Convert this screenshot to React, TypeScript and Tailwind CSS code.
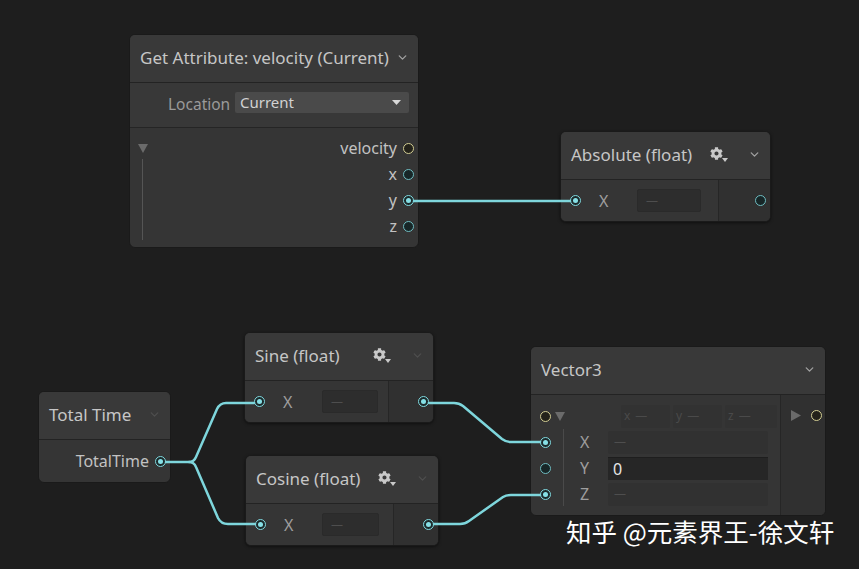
import React from 'react'
import { ChevronDown } from 'lucide-react'
import { FaCog } from 'react-icons/fa'

const font = { fontFamily: '"Noto Sans", "Open Sans", sans-serif' }

// Port circles: cyan float ports (linked / unlinked) and yellow vector ports
const Port = ({ kind }: { kind: 'linked' | 'free' | 'vec' }) => {
  if (kind === 'linked') {
    return (
      <div className="flex h-[11px] w-[11px] shrink-0 items-center justify-center rounded-full border-[1.5px] border-[#80d9df] bg-[#1c2a2b]">
        <div className="h-[5px] w-[5px] rounded-full bg-[#86e0e6]" />
      </div>
    )
  }
  if (kind === 'vec') {
    return <div className="h-[11px] w-[11px] shrink-0 rounded-full border-[1.5px] border-[#d2cd93] bg-[#23221a]" />
  }
  return <div className="h-[11px] w-[11px] shrink-0 rounded-full border-[1.5px] border-[#6fbcc1] bg-[#172627]" />
}

const Fold = () => (
  <svg width="10" height="9" viewBox="0 0 10 9" className="shrink-0">
    <path d="M0 0 H10 L5 9 Z" fill="#6b6b6b" />
  </svg>
)

const Gear = () => (
  <div className="relative h-[16px] w-[18px]">
    <FaCog size={13} color="#c9c9c9" className="absolute left-0 top-0" />
    <svg width="6" height="4" viewBox="0 0 6 4" className="absolute bottom-[1px] right-0">
      <path d="M0 0 H6 L3 4 Z" fill="#c9c9c9" />
    </svg>
  </div>
)

const Header = ({ title, gear, dim }: { title: string; gear?: boolean; dim?: boolean }) => (
  <div className="flex h-[48px] items-center border-b border-[#232323] bg-[#393939] pb-[2px] pl-[10px] pr-[9px]">
    <span className="text-[17px] text-[#c6c6c6]">{title}</span>
    <div className="flex-1" />
    {gear && (
      <div className="mr-[20px] flex items-center">
        <Gear />
      </div>
    )}
    <ChevronDown size={13} strokeWidth={2.5} color={dim ? '#4e4e4e' : '#a0a0a0'} />
  </div>
)

const Field = ({ w }: { w: number }) => (
  <div
    className="flex h-[23px] items-center rounded-[2px] border border-[#2a2a2a] bg-[#2d2d2d] pl-[8px] text-[12px] text-[#4e4e4e]"
    style={{ width: w }}
  >
    —
  </div>
)

// Single-input float operator node (Absolute / Sine / Cosine)
const OpNode = ({ title, x, y, w, split, field, fieldW }: {
  title: string; x: number; y: number; w: number; split: number; field: number; fieldW: number
}) => (
  <div
    className="absolute overflow-hidden rounded-[6px] border border-[#1a1a1a] bg-[#363636] shadow-[0_1px_3px_rgba(0,0,0,0.5)]"
    style={{ left: x, top: y, width: w }}
  >
    <Header title={title} gear dim={title !== 'Absolute (float)'} />
    <div className="flex h-[41px]">
      <div className="flex items-center border-r border-[#262626] bg-[#353535] pl-[9px]" style={{ width: split }}>
        <Port kind="linked" />
        <span className="ml-[18px] text-[16px] text-[#9e9e9e]">X</span>
        <div className="flex-1" />
        <div style={{ marginRight: split - field - fieldW }}>
          <Field w={fieldW} />
        </div>
      </div>
      <div className="flex flex-1 items-center justify-end bg-[#303030] pr-[4px]">
        <Port kind={title === 'Absolute (float)' ? 'free' : 'linked'} />
      </div>
    </div>
  </div>
)

export default function App() {
  return (
    <div className="relative h-[569px] w-[859px] overflow-hidden bg-[#1e1e1e]" style={font}>
      {/* Get Attribute node */}
      <div className="absolute left-[129px] top-[34px] w-[290px] overflow-hidden rounded-[6px] border border-[#1a1a1a] bg-[#353535]">
        <Header title="Get Attribute: velocity (Current)" />
        <div className="flex h-[45px] items-start border-b border-[#252525] bg-[#383838] pt-[9px]">
          <span className="ml-[38px] mt-[2px] w-[67px] text-[15.5px] leading-[21px] text-[#9a9a9a]">Location</span>
          <div className="flex h-[21px] w-[174px] items-center justify-between rounded-[2px] bg-[#4a4a4a] pl-[5px] pr-[8px]">
            <span className="text-[15px] text-[#d2d2d2]">Current</span>
            <svg width="9" height="5" viewBox="0 0 9 5">
              <path d="M0 0 H9 L4.5 5 Z" fill="#d8d8d8" />
            </svg>
          </div>
        </div>
        <div className="relative flex flex-col pb-[8px] pt-[7px]">
          <div className="absolute left-[8px] top-[16px]">
            <Fold />
          </div>
          <div className="absolute left-[12px] top-[31px] h-[81px] w-px bg-[#555555]" />
          {['velocity', 'x', 'y', 'z'].map((p, i) => (
            <div key={p} className="flex h-[26px] items-center justify-end gap-[6px] pr-[4px]">
              <span className="text-[16px] text-[#c2c2c2]">{p}</span>
              <Port kind={i === 0 ? 'vec' : i === 2 ? 'linked' : 'free'} />
            </div>
          ))}
        </div>
      </div>

      <OpNode title="Absolute (float)" x={560} y={131} w={211} split={158} field={77} fieldW={64} />
      <OpNode title="Sine (float)" x={244} y={332} w={190} split={144} field={78} fieldW={56} />
      <OpNode title="Cosine (float)" x={245} y={455} w={194} split={148} field={77} fieldW={57} />

      {/* Total Time node */}
      <div className="absolute left-[38px] top-[391px] w-[133px] overflow-hidden rounded-[6px] border border-[#1a1a1a] bg-[#353535]">
        <Header title="Total Time" dim />
        <div className="flex h-[42px] items-center justify-end gap-[6px] pr-[4px]">
          <span className="text-[16px] text-[#c2c2c2]">TotalTime</span>
          <Port kind="linked" />
        </div>
      </div>

      {/* Vector3 node */}
      <div className="absolute left-[530px] top-[346px] w-[296px] overflow-hidden rounded-[6px] border border-[#1a1a1a] bg-[#353535]">
        <Header title="Vector3" />
        <div className="flex">
          <div className="relative w-[250px] border-r border-[#262626] pb-[8px] pt-[8px] pl-[9px]">
            <div className="absolute left-[32px] top-[34px] h-[77px] w-px bg-[#4a4a4a]" />
            <div className="flex h-[26px] items-center">
              <Port kind="vec" />
              <div className="ml-[4px]">
                <Fold />
              </div>
              <div className="ml-[56px] flex gap-[3px] text-[12px] text-[#4a4a4a]">
                {['x', 'y', 'z'].map((c, i) => (
                  <div key={c} className="flex h-[23px] items-center gap-[5px] rounded-[2px] bg-[#323232] px-[3px]" style={{ width: i === 2 ? 52 : 49 }}>
                    <span>{c}</span>
                    <span>—</span>
                  </div>
                ))}
              </div>
            </div>
            {['X', 'Y', 'Z'].map((c) => (
              <div key={c} className="flex h-[26px] items-center">
                <Port kind={c === 'Y' ? 'free' : 'linked'} />
                <span className="ml-[29px] w-[28px] text-[16px] text-[#9e9e9e]">{c}</span>
                {c === 'Y' ? (
                  <div className="flex h-[23px] w-[160px] items-center border-t border-[#1e1e1e] bg-[#262626] pl-[5px] text-[16px] text-[#e6e6e6]">
                    0
                  </div>
                ) : (
                  <div className="flex h-[23px] w-[160px] items-center rounded-[2px] bg-[#313131] pl-[6px] text-[12px] text-[#4e4e4e]">
                    —
                  </div>
                )}
              </div>
            ))}
          </div>
          <div className="flex flex-1 items-start bg-[#303030] pt-[15px] pl-[10px]">
            <svg width="10" height="11" viewBox="0 0 10 11">
              <path d="M0 0 L10 5.5 L0 11 Z" fill="#6b6b6b" />
            </svg>
            <div className="ml-[10px]">
              <Port kind="vec" />
            </div>
          </div>
        </div>
      </div>

      {/* Edges */}
      <svg className="pointer-events-none absolute left-0 top-0" width="859" height="569">
        <g fill="none" stroke="#7ed6dc" strokeWidth="2.5" strokeLinecap="round" strokeLinejoin="round">
          <path d="M414 201 H570" />
          <path d="M166 462 H189 Q194 462 196 457 L217 409 Q220 403 226 403 H254" />
          <path d="M189 462 Q194 462 196 467 L218 518 Q221 524 228 524 H255" />
          <path d="M429 403 H454 Q459 403 463 406 L502 439 Q506 442 511 442 H540" />
          <path d="M434 524 H460 Q465 524 469 521 L503 497 Q506 495 511 495 H540" />
        </g>
      </svg>

      <div
        className="absolute left-[566px] top-[513px] text-[25.5px] leading-[36px] text-white"
        style={{ fontFamily: '"Noto Sans CJK SC", "Noto Sans", sans-serif' }}
      >
        知乎 @元素界王-徐文轩
      </div>
    </div>
  )
}
